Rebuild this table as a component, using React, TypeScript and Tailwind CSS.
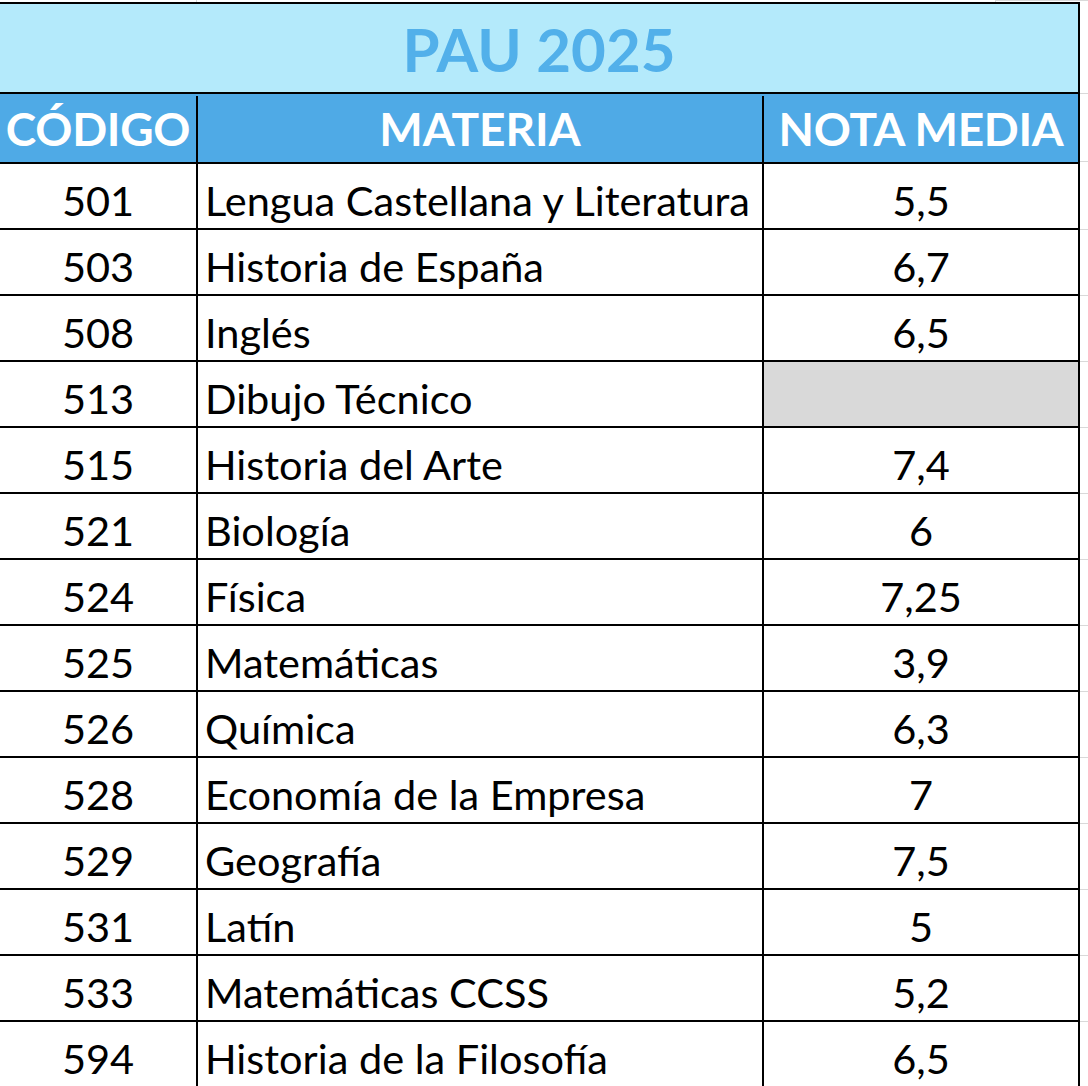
const rows: { code: string; name: string; nota: string; empty?: boolean }[] = [
  { code: "501", name: "Lengua Castellana y Literatura", nota: "5,5" },
  { code: "503", name: "Historia de España", nota: "6,7" },
  { code: "508", name: "Inglés", nota: "6,5" },
  { code: "513", name: "Dibujo Técnico", nota: "", empty: true },
  { code: "515", name: "Historia del Arte", nota: "7,4" },
  { code: "521", name: "Biología", nota: "6" },
  { code: "524", name: "Física", nota: "7,25" },
  { code: "525", name: "Matemáticas", nota: "3,9" },
  { code: "526", name: "Química", nota: "6,3" },
  { code: "528", name: "Economía de la Empresa", nota: "7" },
  { code: "529", name: "Geografía", nota: "7,5" },
  { code: "531", name: "Latín", nota: "5" },
  { code: "533", name: "Matemáticas CCSS", nota: "5,2" },
  { code: "594", name: "Historia de la Filosofía", nota: "6,5" },
];

const App: React.FC = () => {
  return (
    <div className="w-[1088px] h-[1086px] overflow-hidden bg-white font-['Lato',sans-serif] text-black">
      {/* grid lines above the table */}
      <div className="flex h-[2px]">
        <div className="w-[197px] border-r border-[#d9d9d9]" />
        <div className="w-[799px] border-r border-[#d9d9d9]" />
        <div className="flex-1 border-t border-[#d9d9d9]" />
      </div>

      <div className="flex">
        <div className="w-[1080px] border-t-2 border-r-2 border-black">
          <div className="h-[90px] border-b-2 border-black bg-[#b4eafb] flex items-center justify-center pt-[2px]">
            <span className="text-[60px] font-bold leading-none text-[#52b0ea]">PAU 2025</span>
          </div>
          <div className="flex h-[70px] border-b-2 border-black bg-[#4faae6] text-white font-bold text-[46px] leading-none pt-[2px]">
            <div className="w-[198px] border-r-2 border-black flex items-center justify-center tracking-[-0.3px]">CÓDIGO</div>
            <div className="w-[566px] border-r-2 border-black flex items-center justify-center">MATERIA</div>
            <div className="flex-1 flex items-center justify-center tracking-[-0.3px]">NOTA MEDIA</div>
          </div>
        </div>
        <div className="flex-1 flex flex-col">
          <div className="h-[92px] border-b border-[#d9d9d9]" />
          <div className="h-[68px] border-b border-[#d9d9d9]" />
        </div>
      </div>

      {rows.map((r) => (
        <div key={r.code} className="flex h-[66px]">
          <div className="w-[1080px] flex border-b-2 border-r-2 border-black text-[41.5px] leading-none">
            <div className="w-[198px] border-r-2 border-black flex items-center justify-center pt-[10px]">{r.code}</div>
            <div className="w-[566px] border-r-2 border-black flex items-center pl-[7px] pt-[10px] whitespace-nowrap">
              {r.name}
            </div>
            <div className={`flex-1 flex items-center justify-center pt-[10px] ${r.empty ? "bg-[#d9d9d9]" : ""}`}>{r.nota}</div>
          </div>
          <div className="flex-1 border-b border-[#d9d9d9]" />
        </div>
      ))}
    </div>
  );
};

export default App;
